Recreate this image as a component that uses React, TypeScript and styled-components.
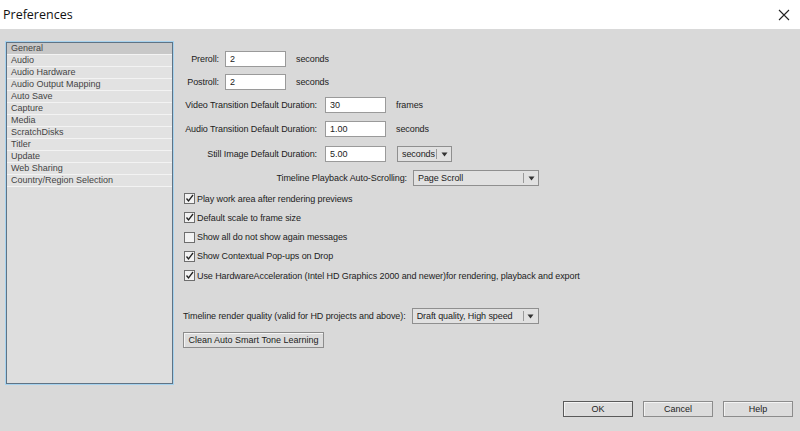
import React from 'react';
import styled, { createGlobalStyle } from 'styled-components';

const GlobalStyle = createGlobalStyle`
  html, body {
    margin: 0;
    padding: 0;
    background: #ffffff;
  }
  body {
    font-family: "Liberation Sans", Arial, sans-serif;
  }
`;

const Window = styled.div`
  width: 800px;
  height: 431px;
  display: flex;
  flex-direction: column;
  overflow: hidden;
`;

const TitleBar = styled.div`
  height: 29px;
  flex: none;
  background: #ffffff;
  display: flex;
  align-items: center;
  justify-content: space-between;
  padding: 0 10px 0 3px;
  font-family: "Open Sans", "Noto Sans", sans-serif;
  font-size: 12.5px;
  color: #111;
`;

const CloseIcon = styled.svg`
  width: 12px;
  height: 12px;
  margin-top: 1px;
`;

const Body = styled.div`
  flex: 1;
  background: #d9d9d9;
  display: flex;
  flex-direction: column;
  padding: 13px 7px 0 6px;
`;

const Main = styled.div`
  display: flex;
  height: 342px;
`;

const Sidebar = styled.ul`
  width: 165px;
  flex: none;
  margin: 0;
  padding: 0;
  list-style: none;
  border: 1px solid #5f7385;
  box-shadow: 0 0 0 1px #a6d2ee;
  background: #dedede;
`;

const SideItem = styled.li<{ $active?: boolean }>`
  height: 11px;
  line-height: 11px;
  padding-left: 4px;
  font-size: 9px;
  color: #444;
  background: ${(p) => (p.$active ? '#c8c8c8' : '#e2e2e2')};
  border-bottom: 1px solid #f3f3f3;
`;

const Content = styled.div`
  flex: 1;
  padding: 9px 0 0 10px;
  font-size: 9px;
  letter-spacing: -0.08px;
  color: #222;
`;

const FieldRow = styled.div<{ $mt?: number }>`
  display: flex;
  align-items: center;
  height: 16px;
  margin-top: ${(p) => p.$mt ?? 0}px;
`;

const Label = styled.span<{ $w: number }>`
  width: ${(p) => p.$w}px;
  flex: none;
  text-align: right;
  white-space: nowrap;
`;

const TextBox = styled.input`
  box-sizing: border-box;
  width: 61px;
  height: 16px;
  margin: 0;
  padding: 0 4px;
  border: 1px solid #9a9a9a;
  background: #ffffff;
  font-family: inherit;
  font-size: 9px;
  color: #222;
  outline: none;
`;

const Gap = styled.span<{ $w: number }>`
  width: ${(p) => p.$w}px;
  flex: none;
`;

const Unit = styled.span`
  white-space: nowrap;
`;

const Select = styled.div<{ $w: number }>`
  box-sizing: border-box;
  width: ${(p) => p.$w}px;
  height: 16px;
  display: flex;
  align-items: center;
  border: 1px solid #8f8f8f;
  background: #e1e1e1;
  font-size: 9px;
  color: #222;
`;

const SelectText = styled.span`
  flex: 1;
  padding-left: 4px;
  white-space: nowrap;
`;

const SelectArrow = styled.span`
  width: 14px;
  height: 10px;
  border-left: 1px solid #9a9a9a;
  display: flex;
  align-items: center;
  justify-content: center;
`;

const CheckList = styled.div`
  margin-top: 3px;
  display: flex;
  flex-direction: column;
`;

const CheckRow = styled.label`
  display: flex;
  align-items: center;
  height: 19.25px;
  padding-left: 1px;
  white-space: nowrap;
`;

const Box = styled.span`
  box-sizing: border-box;
  width: 11px;
  height: 11px;
  border: 1px solid #6e6e6e;
  background: #f2f2f2;
  margin-right: 2px;
  display: flex;
  align-items: center;
  justify-content: center;
  flex: none;
`;

const PushButton = styled.button<{ $w: number; $default?: boolean }>`
  box-sizing: border-box;
  width: ${(p) => p.$w}px;
  height: 16px;
  padding: 0;
  border: 1px solid ${(p) => (p.$default ? '#5a5a5a' : '#8c8c8c')};
  background: #dcdcdc;
  box-shadow: inset 1px 1px 0 #f4f4f4;
  font-family: "Liberation Sans", Arial, sans-serif;
  font-size: 9px;
  color: #222;
`;

const Footer = styled.div`
  display: flex;
  justify-content: flex-end;
  gap: 10px;
  margin-top: 17px;
`;

const Arrow = () => (
  <svg width="7" height="5" viewBox="0 0 7 5">
    <polygon points="0.5,0.5 6.5,0.5 3.5,4.5" fill="#333" />
  </svg>
);

const Check = () => (
  <svg width="9" height="9" viewBox="0 0 9 9">
    <polyline points="1.5,4.5 3.5,7 8,1" fill="none" stroke="#222" strokeWidth="1.3" />
  </svg>
);

const sections = [
  'General',
  'Audio',
  'Audio Hardware',
  'Audio Output Mapping',
  'Auto Save',
  'Capture',
  'Media',
  'ScratchDisks',
  'Titler',
  'Update',
  'Web Sharing',
  'Country/Region Selection',
];

const options = [
  { text: 'Play work area after rendering previews', on: true },
  { text: 'Default scale to frame size', on: true },
  { text: 'Show all do not show again messages', on: false },
  { text: 'Show Contextual Pop-ups on Drop', on: true },
  {
    text: 'Use HardwareAcceleration (Intel HD Graphics 2000 and newer)for rendering, playback and export',
    on: true,
  },
];

export default function App() {
  return (
    <Window>
      <GlobalStyle />
      <TitleBar>
        <span>Preferences</span>
        <CloseIcon viewBox="0 0 12 12">
          <path d="M1 1 L11 11 M11 1 L1 11" stroke="#222" strokeWidth="1.1" />
        </CloseIcon>
      </TitleBar>
      <Body>
        <Main>
          <Sidebar>
            {sections.map((s, i) => (
              <SideItem key={s} $active={i === 0}>
                {s}
              </SideItem>
            ))}
          </Sidebar>
          <Content>
            <FieldRow>
              <Label $w={36}>Preroll:</Label>
              <Gap $w={6} />
              <TextBox readOnly value="2" />
              <Gap $w={10} />
              <Unit>seconds</Unit>
            </FieldRow>
            <FieldRow $mt={7}>
              <Label $w={36}>Postroll:</Label>
              <Gap $w={6} />
              <TextBox readOnly value="2" />
              <Gap $w={10} />
              <Unit>seconds</Unit>
            </FieldRow>
            <FieldRow $mt={7}>
              <Label $w={134}>Video Transition Default Duration:</Label>
              <Gap $w={8} />
              <TextBox readOnly value="30" />
              <Gap $w={10} />
              <Unit>frames</Unit>
            </FieldRow>
            <FieldRow $mt={8}>
              <Label $w={134}>Audio Transition Default Duration:</Label>
              <Gap $w={8} />
              <TextBox readOnly value="1.00" />
              <Gap $w={10} />
              <Unit>seconds</Unit>
            </FieldRow>
            <FieldRow $mt={9}>
              <Label $w={134}>Still Image Default Duration:</Label>
              <Gap $w={8} />
              <TextBox readOnly value="5.00" />
              <Gap $w={11} />
              <Select $w={55}>
                <SelectText>seconds</SelectText>
                <SelectArrow>
                  <Arrow />
                </SelectArrow>
              </Select>
            </FieldRow>
            <FieldRow $mt={8}>
              <Label $w={224}>Timeline Playback Auto-Scrolling:</Label>
              <Gap $w={6} />
              <Select $w={126}>
                <SelectText>Page Scroll</SelectText>
                <SelectArrow>
                  <Arrow />
                </SelectArrow>
              </Select>
            </FieldRow>
            <CheckList>
              {options.map((o) => (
                <CheckRow key={o.text}>
                  <Box>{o.on && <Check />}</Box>
                  {o.text}
                </CheckRow>
              ))}
            </CheckList>
            <FieldRow $mt={23}>
              <Unit>Timeline render quality (valid for HD projects and above):</Unit>
              <Gap $w={6} />
              <Select $w={127}>
                <SelectText>Draft quality, High speed</SelectText>
                <SelectArrow>
                  <Arrow />
                </SelectArrow>
              </Select>
            </FieldRow>
            <FieldRow $mt={8}>
              <PushButton $w={141}>Clean Auto Smart Tone Learning</PushButton>
            </FieldRow>
          </Content>
        </Main>
        <Footer>
          <PushButton $w={70} $default>
            OK
          </PushButton>
          <PushButton $w={70}>Cancel</PushButton>
          <PushButton $w={70}>Help</PushButton>
        </Footer>
      </Body>
    </Window>
  );
}
